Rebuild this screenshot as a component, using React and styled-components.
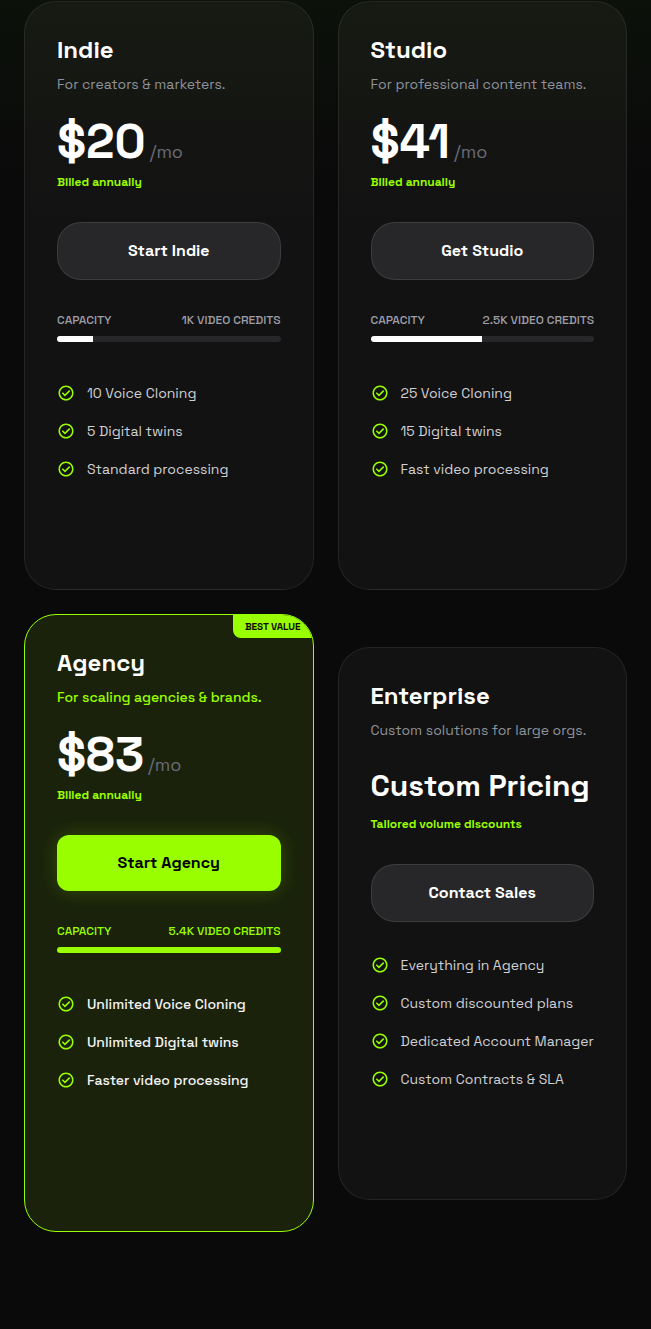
import styled, { createGlobalStyle, css } from 'styled-components';

const colors = {
  page: '#0a0a0a',
  card: '#121212',
  lime: '#99ff00',
  border: 'rgba(255, 255, 255, 0.08)',
  muted: '#8f929a',
  faint: '#6b6b78',
};

const GlobalStyle = createGlobalStyle`
  *, *::before, *::after {
    box-sizing: border-box;
  }

  body {
    margin: 0;
    background: ${colors.page};
    color: #fff;
    font-family: 'Space Grotesk', Inter, 'Liberation Sans', sans-serif;
    -webkit-font-smoothing: antialiased;
  }
`;

const Page = styled.main`
  min-height: 100vh;
  padding: 1px 24px 96px;
  background: linear-gradient(to bottom, #0c110a 0, ${colors.page} 180px);
`;

const PlanGrid = styled.section`
  display: grid;
  grid-template-columns: repeat(2, minmax(0, 1fr));
  gap: 24px;
  align-items: center;
`;

const Card = styled.article`
  position: relative;
  display: flex;
  flex-direction: column;
  padding: 32px 32px 109px;
  border: 1px solid ${colors.border};
  border-radius: 32px;
  background: ${colors.card};
  overflow: hidden;

  ${(props) =>
    props.$tinted &&
    css`
      background: linear-gradient(to bottom, #171a13 0, ${colors.card} 220px);
    `}

  ${(props) =>
    props.$featured &&
    css`
      padding-bottom: 140px;
      border-color: ${colors.lime};
      background: #1a220b;
    `}
`;

const Badge = styled.span`
  position: absolute;
  top: 0;
  right: 0;
  padding: 4px 12px;
  border-bottom-left-radius: 8px;
  background: ${colors.lime};
  color: #0a0a0a;
  font-size: 10px;
  font-weight: 700;
  line-height: 15px;
  text-transform: uppercase;
`;

const PlanName = styled.h3`
  margin: 0 0 8px;
  font-size: 24px;
  font-weight: 600;
  line-height: 32px;
`;

const Tagline = styled.p`
  margin: 0 0 24px;
  color: ${(props) => (props.$featured ? colors.lime : colors.muted)};
  font-size: 14px;
  font-weight: ${(props) => (props.$featured ? 500 : 400)};
  line-height: 20px;
  white-space: nowrap;
`;

const PriceRow = styled.div`
  display: flex;
  align-items: baseline;
  gap: 4px;
  margin-bottom: 8px;
`;

const Price = styled.span`
  font-size: ${(props) => (props.$custom ? '30px' : '48px')};
  font-weight: 700;
  line-height: ${(props) => (props.$custom ? '44px' : '48px')};
  white-space: nowrap;
`;

const Period = styled.span`
  color: ${colors.faint};
  font-size: 18px;
  font-weight: 400;
  line-height: 28px;
`;

const Billing = styled.p`
  margin: 0 0 32px;
  color: ${colors.lime};
  font-size: 12px;
  font-weight: 600;
  line-height: 16px;
`;

const PlanButton = styled.button`
  width: 100%;
  margin-bottom: 32px;
  padding: 16px;
  border: 1px solid rgba(255, 255, 255, 0.1);
  border-radius: 24px;
  background: #27272a;
  color: #fff;
  font-family: inherit;
  font-size: 16px;
  font-weight: 600;
  line-height: 24px;
  cursor: pointer;

  ${(props) =>
    props.$featured &&
    css`
      border: none;
      border-radius: 12px;
      background: ${colors.lime};
      color: #000;
      box-shadow: 0 0 20px rgba(153, 255, 0, 0.2);
    `}
`;

const Capacity = styled.div`
  margin-bottom: 40px;
`;

const CapacityLabels = styled.div`
  display: flex;
  justify-content: space-between;
  margin-bottom: 8px;
  color: ${(props) => (props.$featured ? colors.lime : '#9f9fa9')};
  font-size: 12px;
  font-weight: 500;
  line-height: 16px;
  text-transform: uppercase;
  white-space: nowrap;
`;

const Track = styled.div`
  height: 6px;
  border-radius: 3px;
  background: #27272a;
  overflow: hidden;
`;

const Fill = styled.div`
  height: 100%;
  background: ${(props) => (props.$featured ? colors.lime : '#fff')};
`;

const FeatureList = styled.ul`
  display: flex;
  flex-direction: column;
  gap: 16px;
  margin: 0;
  padding: 0;
  list-style: none;
`;

const Feature = styled.li`
  display: flex;
  align-items: center;
  gap: 12px;
  color: ${(props) => (props.$featured ? '#f4f4f5' : '#d0d0d4')};
  font-size: 14px;
  font-weight: ${(props) => (props.$featured ? 500 : 400)};
  line-height: 22px;
  white-space: nowrap;
`;

const CheckSvg = styled.svg`
  flex-shrink: 0;
  width: 18px;
  height: 18px;
  fill: ${colors.lime};
`;

const CheckIcon = () => (
  <CheckSvg viewBox="0 -960 960 960" aria-hidden="true">
    <path d="m424-296 282-282-56-56-226 226-114-114-56 56 170 170Zm56 216q-83 0-156-31.500T197-197q-54-54-85.500-127T80-480q0-83 31.500-156T197-763q54-54 127-85.500T480-880q83 0 156 31.500T763-763q54 54 85.500 127T880-480q0 83-31.500 156T763-197q-54 54-127 85.500T480-80Zm0-80q134 0 227-93t93-227q0-134-93-227t-227-93q-134 0-227 93t-93 227q0 134 93 227t227 93Z" />
  </CheckSvg>
);

const PLANS = [
  {
    name: 'Indie',
    tagline: 'For creators & marketers.',
    price: '$20',
    period: '/mo',
    billing: 'Billed annually',
    action: 'Start Indie',
    credits: '1K video credits',
    capacity: 16,
    features: ['10 Voice Cloning', '5 Digital twins', 'Standard processing'],
    tinted: true,
  },
  {
    name: 'Studio',
    tagline: 'For professional content teams.',
    price: '$41',
    period: '/mo',
    billing: 'Billed annually',
    action: 'Get Studio',
    credits: '2.5K video credits',
    capacity: 50,
    features: ['25 Voice Cloning', '15 Digital twins', 'Fast video processing'],
    tinted: true,
  },
  {
    name: 'Agency',
    tagline: 'For scaling agencies & brands.',
    price: '$83',
    period: '/mo',
    billing: 'Billed annually',
    action: 'Start Agency',
    credits: '5.4K video credits',
    capacity: 100,
    features: ['Unlimited Voice Cloning', 'Unlimited Digital twins', 'Faster video processing'],
    badge: 'Best value',
    featured: true,
  },
  {
    name: 'Enterprise',
    tagline: 'Custom solutions for large orgs.',
    price: 'Custom Pricing',
    billing: 'Tailored volume discounts',
    action: 'Contact Sales',
    features: [
      'Everything in Agency',
      'Custom discounted plans',
      'Dedicated Account Manager',
      'Custom Contracts & SLA',
    ],
  },
];

const PlanCard = ({ plan }) => {
  const { featured } = plan;

  return (
    <Card $featured={featured} $tinted={plan.tinted}>
      {plan.badge && <Badge>{plan.badge}</Badge>}
      <PlanName>{plan.name}</PlanName>
      <Tagline $featured={featured}>{plan.tagline}</Tagline>
      <PriceRow>
        <Price $custom={!plan.period}>{plan.price}</Price>
        {plan.period && <Period>{plan.period}</Period>}
      </PriceRow>
      <Billing>{plan.billing}</Billing>
      <PlanButton type="button" $featured={featured}>
        {plan.action}
      </PlanButton>
      {plan.credits && (
        <Capacity>
          <CapacityLabels $featured={featured}>
            <span>Capacity</span>
            <span>{plan.credits}</span>
          </CapacityLabels>
          <Track>
            <Fill $featured={featured} style={{ width: `${plan.capacity}%` }} />
          </Track>
        </Capacity>
      )}
      <FeatureList>
        {plan.features.map((feature) => (
          <Feature key={feature} $featured={featured}>
            <CheckIcon />
            {feature}
          </Feature>
        ))}
      </FeatureList>
    </Card>
  );
};

export default function App() {
  return (
    <>
      <GlobalStyle />
      <Page>
        <PlanGrid>
          {PLANS.map((plan) => (
            <PlanCard key={plan.name} plan={plan} />
          ))}
        </PlanGrid>
      </Page>
    </>
  );
}
